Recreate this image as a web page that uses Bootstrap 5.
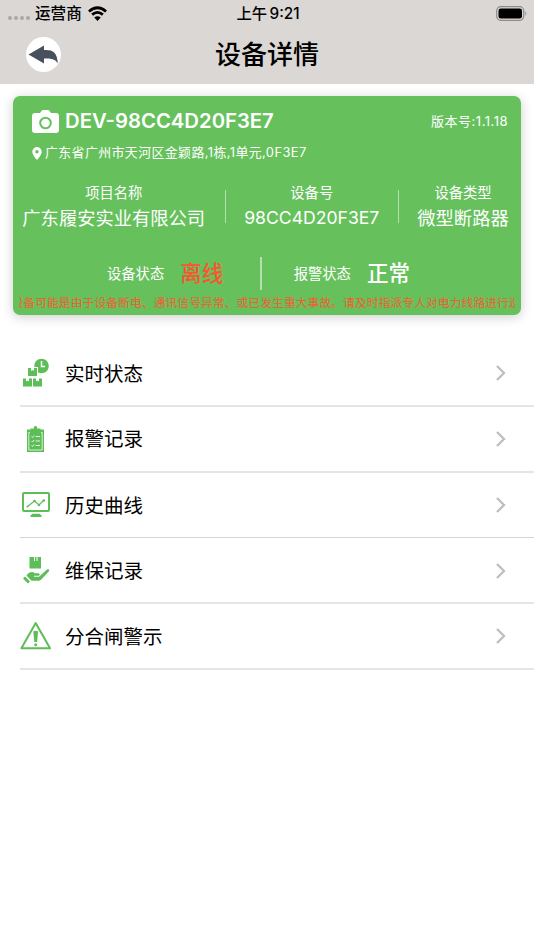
<!DOCTYPE html>
<html lang="zh-CN">
<head>
<meta charset="utf-8">
<meta name="viewport" content="width=device-width, initial-scale=1">
<title>设备详情</title>
<link href="https://cdn.jsdelivr.net/npm/bootstrap@5.3.0/dist/css/bootstrap.min.css" rel="stylesheet">
<style>
body{font-family:Inter,"Noto Sans CJK SC",sans-serif;color:#000;background:#fff;line-height:1;overflow:hidden}
svg{display:block;flex:none}
.top-area{height:84px;background:#dbd7d4}
.status-bar{height:26px;font-size:15.6px;font-weight:500;display:grid;grid-template-columns:1fr auto 1fr;padding:0 6px 0 8px}
.status-bar span{padding-top:2px}
.clock{font-size:15.3px;word-spacing:-1.5px}
.signal i{display:block;width:4px;height:4px;border-radius:50%;background:#aaa7a5}
.signal{gap:2px;margin-top:9px;margin-right:5px}
.wifi{margin-left:6px}
.title-bar{height:58px;display:grid;grid-template-columns:1fr auto 1fr;padding:0 26px}
.title-bar h1{font-size:26px;font-weight:500;margin:-1px 0 0;line-height:1}
.back{width:35px;height:35px;margin-top:-1px}
.device{margin:12px 13px 0;height:219px;border:0;border-radius:7px;background:#66c15d;color:#fff;box-shadow:0 2px 12px rgba(0,0,0,.2)}
.head-line{height:51px;padding:0 13px 0 19px}
.dev-name{font-size:20.3px;font-weight:600;margin-left:6px}
.version{font-size:13px;letter-spacing:.5px}
.address{height:12px;padding-left:19px;font-size:12.9px;letter-spacing:.42px;gap:3px}
.facts{height:64px;margin-top:15px}
.fact{display:flex;flex-direction:column;align-items:center;white-space:nowrap;flex:none}
.fact span{font-size:14.3px;line-height:20px;margin-top:9px}
.fact b{font-size:18.3px;font-weight:400;line-height:26px;margin-top:2px}
.fact .num{font-size:17.6px}
.f1{width:211.5px;padding-right:10px}.f2{width:171.500px}.f3{width:122px;padding-left:6px}
.bar{flex:none;width:1.5px;height:33px;background:rgba(255,255,255,.5)}
.states{height:46px;margin-top:12px;font-size:14.3px;padding-left:94px}
.states span,.states b{padding-top:2px}
.states .bar{margin:0 32px 0 37px}
.states b{font-size:21.5px;font-weight:500}
.off{color:#fb5430}
.marquee{height:16px;margin:-1px 6px 0;overflow:hidden;white-space:nowrap;color:#ee5f32;font-size:11.85px;line-height:16px}
.marquee span{display:block;margin-left:-7.5px}
.menu{margin:26px 0 0 20px;border-radius:0}
.menu .list-group-item{height:65.75px;padding:0 28px 0 0;border:0;border-bottom:2px solid #e5e5e5;color:#000;font-size:19.5px;background:none}
.menu .list-group-item:nth-child(3){border-bottom:1px solid #d6d6d6}
.menu span{padding-top:3px}
.menu svg{margin-top:1px}
.ico{width:32px;margin-right:13px}
</style>
</head>
<body>
<header class="top-area">
  <div class="status-bar align-items-center">
    <div class="d-flex align-items-center"><div class="signal d-flex"><i></i><i></i><i></i><i></i></div><span>运营商</span>
      <svg class="wifi" width="19" height="15" viewBox="0 0 18 14" fill="none" stroke="#000" stroke-width="2.6"><path d="M.9 5.1Q9-2 17.1 5.1M3.9 8.1Q9 3.7 14.1 8.1"/><path d="M9 14L5.9 10.8Q9 8.4 12.1 10.8Z" fill="#000" stroke="none"/></svg>
    </div>
    <span class="clock">上午 9:21</span>
    <svg class="ms-auto" width="32" height="15" viewBox="0 0 32 15"><rect x=".7" y=".7" width="27" height="13.6" rx="4" fill="none" stroke="#8d8a88" stroke-width="1.2"/><rect x="2.5" y="2.5" width="23.5" height="10" rx="2.3"/><path d="M29.3 5.1q2 2.4 0 4.8z" fill="#8d8a88"/></svg>
  </div>
  <div class="title-bar align-items-center">
    <a href="#" class="back rounded-circle bg-white d-flex align-items-center justify-content-center" aria-label="返回"><svg width="31" height="20" viewBox="0 0 31 20"><path d="M.5 9.600L16 .5V5C25 4.600 29 7 29.800 18.300C26.500 14 24 13.400 16 13.600V18.400Z" fill="#47505c"/></svg></a>
    <h1>设备详情</h1>
  </div>
</header>
<main>
  <section class="card device">
    <div class="head-line d-flex align-items-center">
      <svg width="27" height="24" viewBox="0 0 27 24"><path d="M3 3h5l1.500-2Q10 0 11 0h5q1 0 1.500 1L19 3h5q3 0 3 3v14q0 3-3 3H3q-3 0-3-3V6q0-3 3-3z" fill="#fff"/><circle cx="13.500" cy="13" r="5.300" fill="none" stroke="#66c15d" stroke-width="2"/></svg>
      <span class="dev-name">DEV-98CC4D20F3E7</span><span class="version ms-auto">版本号:1.1.18</span>
    </div>
    <div class="address d-flex align-items-center">
      <svg width="10" height="13" viewBox="0 0 10 13"><path fill="#fff" fill-rule="evenodd" d="M5 0a4.700 4.700 0 0 1 4.700 4.700C9.700 8 5 13 5 13S.3 8 .3 4.700A4.700 4.700 0 0 1 5 0zm0 3a1.700 1.700 0 1 0 0 3.400A1.700 1.700 0 0 0 5 3z"/></svg>
      <span>广东省广州市天河区金颖路,1栋,1单元,0F3E7</span>
    </div>
    <div class="facts d-flex align-items-center">
      <div class="fact f1 h-100"><span>项目名称</span><b>广东履安实业有限公司</b></div>
      <div class="bar"></div>
      <div class="fact f2 h-100"><span>设备号</span><b class="num">98CC4D20F3E7</b></div><div class="bar"></div>
      <div class="fact f3 h-100"><span>设备类型</span><b>微型断路器</b></div>
    </div>
    <div class="states d-flex align-items-center"><span>设备状态</span><b class="off ms-3">离线</b><div class="bar"></div><span>报警状态</span><b class="ms-3">正常</b></div>
    <div class="marquee"><span>设备可能是由于设备断电、通讯信号异常、或已发生重大事故。请及时指派专人对电力线路进行巡检</span></div>
  </section>
  <nav class="list-group menu">
    <a href="#" class="list-group-item d-flex align-items-center">
      <svg class="ico" width="32" height="32" viewBox="0 0 32 32" fill="#5dbe57"><circle cx="21.500" cy="9" r="7.300"/><path d="M21.500 4v5.500H25" fill="none" stroke="#fff" stroke-width="1.500"/><path d="M7 10h11v9H7z" fill="#fff"/><path d="M8 11h3v3l1.500-1 1.500 1v-3h3v8H8zM3 21.500h3v3l1.500-1 1.500 1v-3h3v8H3zM13 21.500h3v3l1.500-1 1.500 1v-3h3v8h-9z"/></svg>
      <span>实时状态</span><svg class="ms-auto" width="10" height="16" viewBox="0 0 10 16" fill="none" stroke="#bebec1" stroke-width="2.300"><path d="M1 1l7 7-7 7"/></svg></a>
    <a href="#" class="list-group-item d-flex align-items-center">
      <svg class="ico" width="32" height="32" viewBox="0 0 32 32"><path d="M7 6.500h17V29H7z" fill="#5dbe57"/><path d="M10 9.500H8.800V27h13.400V9.500H21" fill="none" stroke="#e5f5e3" stroke-width=".9"/><path d="M10.500 9.500V5.500H14a1.700 1.700 0 1 1 3 0h3.500v4z" fill="#5dbe57"/><path d="M15.500 13.500h4.500M15.500 18h4.500M15.500 22.500h4.500M11.500 13.500l1 1 1.500-2M11.500 18l1 1 1.500-2M11.500 22.500l1 1 1.500-2" fill="none" stroke="#e5f5e3"/></svg>
      <span>报警记录</span><svg class="ms-auto" width="10" height="16" viewBox="0 0 10 16" fill="none" stroke="#bebec1" stroke-width="2.300"><path d="M1 1l7 7-7 7"/></svg></a>
    <a href="#" class="list-group-item d-flex align-items-center">
      <svg class="ico" width="32" height="32" viewBox="0 0 32 32" fill="none" stroke="#5dbe57"><rect x="3" y="4" width="26" height="18" rx="1" stroke-width="2"/><path d="M7.500 17.500l7-5.500 4.500 4 4.500-4.500" stroke-width="1.200"/><g fill="#5dbe57" stroke="none"><circle cx="7.500" cy="17.500" r="1"/><circle cx="14.500" cy="12" r="1.300"/><circle cx="19" cy="16" r="1.300"/><circle cx="23.800" cy="11.500" r="1.300"/><path d="M12.500 24.800h7l2 1.500v1.700h-11v-1.700z"/></g></svg>
      <span>历史曲线</span><svg class="ms-auto" width="10" height="16" viewBox="0 0 10 16" fill="none" stroke="#bebec1" stroke-width="2.300"><path d="M1 1l7 7-7 7"/></svg></a>
    <a href="#" class="list-group-item d-flex align-items-center">
      <svg class="ico" width="32" height="32" viewBox="0 0 32 32" fill="#5dbe57"><path d="M9.500 2H14v4h1V2h1.500v4h1V2H21v11.500H9.500zM3 23.500l2-2 5 5-2 2zM6.500 20.500c3-4 6-4 8.500-2.300h3c2.300 0 2.300 2.600 0 2.600h-4v1h5l8-7.300c1.500-1 3 .3 2 1.800l-7.500 8c-1 1-2 1.500-4 1.500h-6z"/></svg>
      <span>维保记录</span><svg class="ms-auto" width="10" height="16" viewBox="0 0 10 16" fill="none" stroke="#bebec1" stroke-width="2.300"><path d="M1 1l7 7-7 7"/></svg></a>
    <a href="#" class="list-group-item d-flex align-items-center">
      <svg class="ico" width="32" height="32" viewBox="0 0 32 32" fill="none"><path d="M15.700 3L30 28.300H1.400z" stroke="#5dbe57" stroke-width="2" stroke-linejoin="round"/><path d="M13.300 11.500q2.400-1.500 4.800 0l-1 10.500h-2.800z" fill="#5dbe57"/><circle cx="15.700" cy="24.800" r="1.500" fill="#5dbe57"/></svg>
      <span>分合闸警示</span><svg class="ms-auto" width="10" height="16" viewBox="0 0 10 16" fill="none" stroke="#bebec1" stroke-width="2.300"><path d="M1 1l7 7-7 7"/></svg></a>
  </nav>
</main>
<script src="https://cdn.jsdelivr.net/npm/bootstrap@5.3.0/dist/js/bootstrap.bundle.min.js"></script>
</body>
</html>
